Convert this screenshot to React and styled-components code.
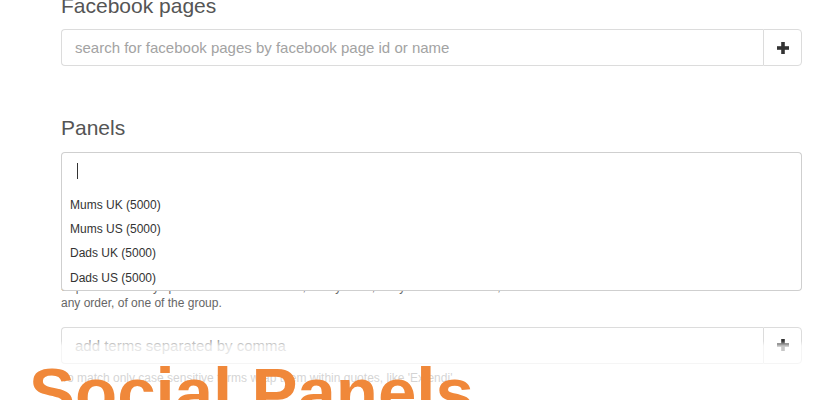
import React from "react";
import styled, { createGlobalStyle } from "styled-components";

const GlobalStyle = createGlobalStyle`
  html, body { margin: 0; padding: 0; background: #fff; }
  body { font-family: "Liberation Sans", Arial, sans-serif; }
  * { box-sizing: border-box; }
`;

const Page = styled.div`
  position: relative;
  width: 840px;
  height: 400px;
  overflow: hidden;
  padding: 0 38px 0 61px;
  background: #fff;
`;

const Heading = styled.h3`
  margin: ${(p) => p.$mt}px 0 0 0;
  font-size: 21px;
  line-height: 23px;
  font-weight: 400;
  color: #555;
`;

const InputGroup = styled.div`
  display: flex;
  height: 37px;
  margin-top: ${(p) => p.$mt}px;
`;

const TextInput = styled.input`
  flex: 1;
  min-width: 0;
  height: 100%;
  border: 1px solid #dcdcdc;
  border-right: none;
  border-radius: 4px 0 0 4px;
  padding: 0 13px;
  font-family: "Liberation Sans", Arial, sans-serif;
  font-size: 15px;
  color: #555;
  background: #fff;
  outline: none;
  &::placeholder { color: #a3a3a3; }
`;

const AddButton = styled.button`
  width: 39px;
  height: 100%;
  padding: 0;
  border: 1px solid #dcdcdc;
  border-radius: 0 4px 4px 0;
  background: #fff;
  display: flex;
  align-items: center;
  justify-content: center;
  color: #333;
`;

const PanelsField = styled.div`
  position: relative;
  margin-top: 13px;
`;

const Control = styled.div`
  height: 40.5px;
  border: 1px solid #cfcfcf;
  border-bottom: none;
  border-radius: 4px 4px 0 0;
  padding: 10px 0 0 15px;
  background: #fff;
`;

const Caret = styled.span`
  display: block;
  width: 1px;
  height: 16px;
  background: #333;
`;

const Menu = styled.ul`
  position: absolute;
  top: 40.5px;
  left: 0;
  right: 0;
  margin: 0;
  padding: 0;
  list-style: none;
  border: 1px solid #cfcfcf;
  border-top: none;
  border-radius: 0 0 4px 4px;
  background: #fff;
  z-index: 1;
`;

const MenuItem = styled.li`
  padding-left: 8px;
  font-size: 12px;
  line-height: 24.4px;
  color: #333;
`;

const Help = styled.p`
  margin: ${(p) => p.$mt}px 0 0 0;
  font-size: 12px;
  line-height: 16px;
  color: #666;
`;

const Fade = styled.div`
  position: absolute;
  left: 0;
  right: 0;
  top: 341px;
  bottom: 0;
  background: linear-gradient(
    to bottom,
    rgba(255, 255, 255, 0) 0px,
    rgba(255, 255, 255, 0.72) 5px,
    rgba(255, 255, 255, 0.72) 100%
  );
  z-index: 2;
`;

const Brand = styled.div`
  position: absolute;
  left: 29px;
  top: 358px;
  font-family: "Liberation Sans", Arial, sans-serif;
  font-weight: 700;
  font-size: 69px;
  line-height: 1;
  color: #f0883a;
  white-space: nowrap;
  z-index: 3;
`;

const PlusIcon = () => (
  <svg width="12" height="12" viewBox="0 0 12 12" aria-hidden="true">
    <rect x="4.2" y="0" width="3.6" height="12" fill="currentColor" />
    <rect x="0" y="4.2" width="12" height="3.6" fill="currentColor" />
  </svg>
);

const panels = ["Mums UK (5000)", "Mums US (5000)", "Dads UK (5000)", "Dads US (5000)"];

export default function App() {
  return (
    <>
      <GlobalStyle />
      <Page>
        <Heading $mt={-6}>Facebook pages</Heading>
        <InputGroup $mt={12}>
          <TextInput placeholder="search for facebook pages by facebook page id or name" />
          <AddButton type="button"><PlusIcon /></AddButton>
        </InputGroup>

        <Heading $mt={50}>Panels</Heading>
        <PanelsField>
          <Control><Caret /></Control>
          <Menu>
            {panels.map((p) => (
              <MenuItem key={p}>{p}</MenuItem>
            ))}
          </Menu>
          <Help $mt={86}>
            Separate terms by space to match all of them, in any order, or by comma to match, in
            <br />
            any order, of one of the group.
          </Help>
        </PanelsField>

        <InputGroup $mt={16}>
          <TextInput placeholder="add terms separated by comma" />
          <AddButton type="button"><PlusIcon /></AddButton>
        </InputGroup>
        <Help $mt={6}>To match only case sensitive terms wrap them within quotes, like 'Extendi'.</Help>

        <Fade />
        <Brand>Social Panels</Brand>
      </Page>
    </>
  );
}
